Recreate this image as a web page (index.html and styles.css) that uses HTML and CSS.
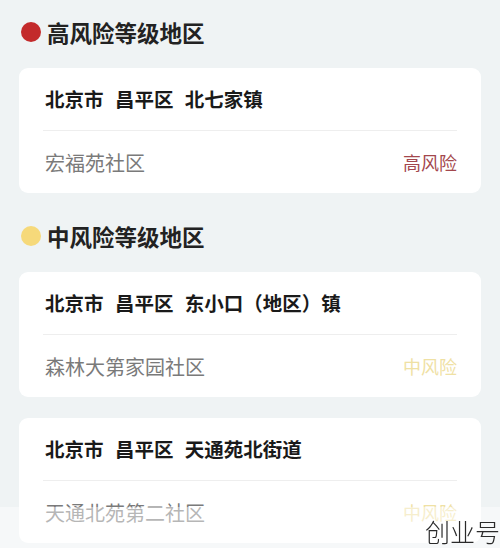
FILE: index.html
```html
<!DOCTYPE html>
<html lang="zh-CN">
<head>
    <meta charset="UTF-8">
    <meta name="viewport" content="width=device-width, initial-scale=1.0">
    <title>风险等级地区</title>
    <link rel="stylesheet" href="styles.css">
</head>
<body>
    <div class="section">
        <h2 class="section-title"><span class="dot dot-high"></span>高风险等级地区</h2>
        <div class="card">
            <div class="card-title">北京市 昌平区 北七家镇</div>
            <div class="card-row">
                <span class="community">宏福苑社区</span>
                <span class="level level-high">高风险</span>
            </div>
        </div>
    </div>

    <div class="section">
        <h2 class="section-title"><span class="dot dot-mid"></span>中风险等级地区</h2>
        <div class="card">
            <div class="card-title">北京市 昌平区 东小口（地区）镇</div>
            <div class="card-row">
                <span class="community">森林大第家园社区</span>
                <span class="level level-mid">中风险</span>
            </div>
        </div>
        <div class="card">
            <div class="card-title">北京市 昌平区 天通苑北街道</div>
            <div class="card-row">
                <span class="community">天通北苑第二社区</span>
                <span class="level level-mid">中风险</span>
            </div>
        </div>
    </div>

    <div class="watermark"><span>创业号</span></div>
</body>
</html>
```

FILE: styles.css
```css
body {
    font-family: "Liberation Sans", "Noto Sans CJK SC", sans-serif;
    margin: 0;
    padding: 17px 19px 0;
    background-color: #eff3f4;
    color: #1c1c1c;
}
.section {
    margin-bottom: 28px;
}
.section-title {
    display: flex;
    align-items: center;
    gap: 6px;
    height: 30px;
    margin: 0 0 21px;
    padding-left: 2px;
    font-size: 22.5px;
    font-weight: 700;
    color: #222;
}
.dot {
    width: 20px;
    height: 20px;
    border-radius: 50%;
    flex-shrink: 0;
}
.dot-high {
    background-color: #c32a2b;
}
.dot-mid {
    background-color: #f6d97a;
}
.card {
    background-color: #ffffff;
    border-radius: 9px;
    padding: 0 24px;
    margin-bottom: 21px;
}
.card-title {
    height: 62px;
    line-height: 64px;
    padding-left: 2px;
    border-bottom: 1px solid #eeeeee;
    font-size: 19.5px;
    font-weight: 700;
    word-spacing: 6px;
    color: #1a1a1a;
}
.card-row {
    display: flex;
    justify-content: space-between;
    align-items: center;
    height: 62px;
    padding-left: 2px;
}
.community {
    font-size: 20px;
    color: #7a7a7a;
}
.level {
    font-size: 18px;
}
.level-high {
    color: #a3474d;
}
.level-mid {
    color: #efe1a4;
}
.watermark {
    position: fixed;
    left: 0;
    right: 0;
    bottom: 0;
    height: 41px;
    background-color: rgba(255, 255, 255, 0.45);
    display: flex;
    justify-content: flex-end;
    align-items: center;
}
.watermark span {
    font-size: 25px;
    font-weight: 300;
    color: #2a2a2a;
    padding-top: 6px;
}
```
